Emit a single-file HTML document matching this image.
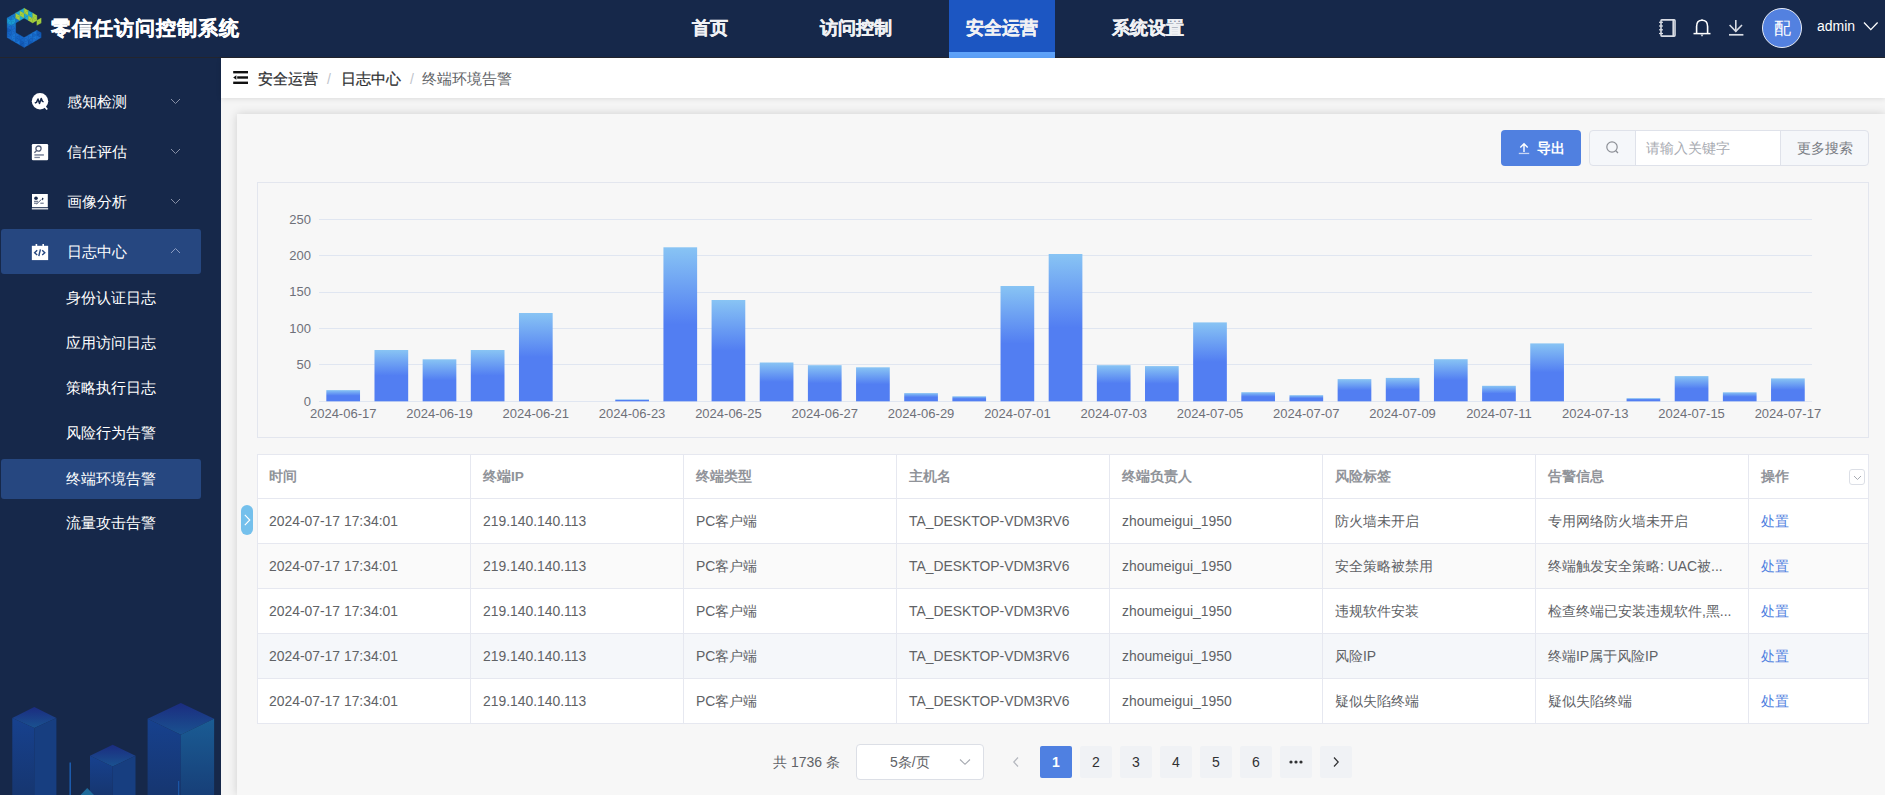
<!DOCTYPE html>
<html><head><meta charset="utf-8">
<style>
*{margin:0;padding:0;box-sizing:border-box}
html,body{width:1885px;height:795px;overflow:hidden;background:#f0f0f0;font-family:"Liberation Sans",sans-serif;}
.abs{position:absolute}
#header{position:absolute;left:0;top:0;width:1885px;height:58px;background:#16284a;border-bottom:1px solid #23252d}
#title{position:absolute;left:51px;top:15px;font-size:20.2px;font-weight:bold;color:#fff;letter-spacing:0.95px;white-space:nowrap;-webkit-text-stroke:0.35px #fff}
.nav{position:absolute;top:0;height:57px;width:106px;text-align:center;font-size:18px;font-weight:bold;color:#f0f1f4;line-height:56px;-webkit-text-stroke:0.35px #f0f1f4}
.nav.active{background:#1c56c2}
.nav.active:after{content:"";position:absolute;left:0;bottom:-1px;width:106px;height:6px;background:#5ea2f9}
#sidebar{position:absolute;left:0;top:58px;width:221px;height:737px;background:#16284a;overflow:hidden}
.mi{position:absolute;left:1px;width:200px;height:45px;color:#fff;font-size:15px}
.mi .t{position:absolute;left:66px;top:0;line-height:45px;white-space:nowrap}
.mi svg.ic{position:absolute;left:29px;width:19px;height:19px}
.mi svg.ch{position:absolute;left:169px;top:19px;width:11px;height:7px}
.mi.active{background:#264780;border-radius:3px}
.si{position:absolute;left:1px;width:200px;height:40px;color:#fff;font-size:15px;line-height:40px}
.si .t{position:absolute;left:65px;white-space:nowrap}
.si.active{background:#264780;border-radius:3px}
#bc{position:absolute;left:221px;top:58px;width:1664px;height:40px;background:#fff;box-shadow:0 1px 5px rgba(0,0,0,0.10)}
#main{position:absolute;left:221px;top:98px;width:1664px;height:697px;background:#f5f5f5}
#card{position:absolute;left:237px;top:114px;width:1648px;height:681px;background:#f7f7f7;box-shadow:0 0 9px rgba(0,0,0,0.16)}
.bct{position:absolute;top:58.5px;line-height:40px;font-size:15px;white-space:nowrap}
.th{position:absolute;top:455px;line-height:44px;font-size:13.6px;font-weight:bold;color:#909399;white-space:nowrap}
.td{position:absolute;line-height:44px;font-size:13.9px;color:#606266;white-space:nowrap}
.td.link{color:#4f7fe0}
.pg{position:absolute;top:746px;width:32px;height:32px;background:#f0f2f5;border-radius:2px;text-align:center;line-height:32px;font-size:14px;color:#303133}
.pg.active{background:#4f80e1;color:#fff;font-weight:bold}
</style></head><body>
<div id="header">
  <svg class="abs" style="left:0;top:0" width="50" height="52" viewBox="0 0 50 52"><g stroke-width="0.35" stroke-linejoin="round"><polygon points="7.20,18.00 7.20,22.90 11.44,20.45" fill="#1a9bd3" stroke="#1a9bd3"/><polygon points="11.44,15.55 11.44,20.45 7.20,18.00" fill="#1677cc" stroke="#1677cc"/><polygon points="7.20,22.90 7.20,27.80 11.44,25.35" fill="#1677cc" stroke="#1677cc"/><polygon points="11.44,20.45 11.44,25.35 7.20,22.90" fill="#1a9bd3" stroke="#1a9bd3"/><polygon points="7.20,27.80 7.20,32.70 11.44,30.25" fill="#125bb8" stroke="#125bb8"/><polygon points="11.44,25.35 11.44,30.25 7.20,27.80" fill="#1a6bcc" stroke="#1a6bcc"/><polygon points="7.20,32.70 7.20,37.60 11.44,35.15" fill="#1565c6" stroke="#1565c6"/><polygon points="11.44,30.25 11.44,35.15 7.20,32.70" fill="#1565c6" stroke="#1565c6"/><polygon points="11.44,35.15 11.44,40.05 7.20,37.60" fill="#1a6bcc" stroke="#1a6bcc"/><polygon points="11.44,15.55 11.44,20.45 15.68,18.00" fill="#1683cf" stroke="#1683cf"/><polygon points="15.68,13.10 15.68,18.00 11.44,15.55" fill="#1677cc" stroke="#1677cc"/><polygon points="11.44,20.45 11.44,25.35 15.68,22.90" fill="#1a9bd3" stroke="#1a9bd3"/><polygon points="15.68,18.00 15.68,22.90 11.44,20.45" fill="#1a9bd3" stroke="#1a9bd3"/><polygon points="11.44,25.35 11.44,30.25 15.68,27.80" fill="#1a6bcc" stroke="#1a6bcc"/><polygon points="15.68,22.90 15.68,27.80 11.44,25.35" fill="#1677cc" stroke="#1677cc"/><polygon points="11.44,30.25 11.44,35.15 15.68,32.70" fill="#1a6bcc" stroke="#1a6bcc"/><polygon points="15.68,27.80 15.68,32.70 11.44,30.25" fill="#1a6bcc" stroke="#1a6bcc"/><polygon points="11.44,35.15 11.44,40.05 15.68,37.60" fill="#1a74d4" stroke="#1a74d4"/><polygon points="15.68,32.70 15.68,37.60 11.44,35.15" fill="#1a74d4" stroke="#1a74d4"/><polygon points="15.68,37.60 15.68,42.50 11.44,40.05" fill="#1a74d4" stroke="#1a74d4"/><polygon points="15.68,13.10 15.68,18.00 19.92,15.55" fill="#a6d03c" stroke="#a6d03c"/><polygon points="19.92,10.65 19.92,15.55 15.68,13.10" fill="#1fa9d2" stroke="#1fa9d2"/><polygon points="15.68,18.00 15.68,22.90 19.92,20.45" fill="#1673cc" stroke="#1673cc"/><polygon points="19.92,15.55 19.92,20.45 15.68,18.00" fill="#a6d03c" stroke="#a6d03c"/><polygon points="15.68,32.70 15.68,37.60 19.92,35.15" fill="#1a6bcc" stroke="#1a6bcc"/><polygon points="15.68,37.60 15.68,42.50 19.92,40.05" fill="#1565c6" stroke="#1565c6"/><polygon points="19.92,35.15 19.92,40.05 15.68,37.60" fill="#1565c6" stroke="#1565c6"/><polygon points="19.92,40.05 19.92,44.95 15.68,42.50" fill="#1a74d4" stroke="#1a74d4"/><polygon points="19.92,10.65 19.92,15.55 24.16,13.10" fill="#a6d03c" stroke="#a6d03c"/><polygon points="24.16,8.20 24.16,13.10 19.92,10.65" fill="#1fa9d2" stroke="#1fa9d2"/><polygon points="19.92,15.55 19.92,20.45 24.16,18.00" fill="#1fa9d2" stroke="#1fa9d2"/><polygon points="24.16,13.10 24.16,18.00 19.92,15.55" fill="#a6d03c" stroke="#a6d03c"/><polygon points="19.92,35.15 19.92,40.05 24.16,37.60" fill="#1565c6" stroke="#1565c6"/><polygon points="19.92,40.05 19.92,44.95 24.16,42.50" fill="#125bb8" stroke="#125bb8"/><polygon points="24.16,37.60 24.16,42.50 19.92,40.05" fill="#1565c6" stroke="#1565c6"/><polygon points="24.16,42.50 24.16,47.40 19.92,44.95" fill="#125bb8" stroke="#125bb8"/><polygon points="24.16,8.20 24.16,13.10 28.40,10.65" fill="#a6d03c" stroke="#a6d03c"/><polygon points="24.16,13.10 24.16,18.00 28.40,15.55" fill="#1fa9d2" stroke="#1fa9d2"/><polygon points="28.40,10.65 28.40,15.55 24.16,13.10" fill="#a6d03c" stroke="#a6d03c"/><polygon points="28.40,15.55 28.40,20.45 24.16,18.00" fill="#1fa9d2" stroke="#1fa9d2"/><polygon points="24.16,37.60 24.16,42.50 28.40,40.05" fill="#1a6bcc" stroke="#1a6bcc"/><polygon points="28.40,35.15 28.40,40.05 24.16,37.60" fill="#1a6bcc" stroke="#1a6bcc"/><polygon points="24.16,42.50 24.16,47.40 28.40,44.95" fill="#1a6bcc" stroke="#1a6bcc"/><polygon points="28.40,40.05 28.40,44.95 24.16,42.50" fill="#1a6bcc" stroke="#1a6bcc"/><polygon points="28.40,10.65 28.40,15.55 32.64,13.10" fill="#1fa9d2" stroke="#1fa9d2"/><polygon points="28.40,15.55 28.40,20.45 32.64,18.00" fill="#a6d03c" stroke="#a6d03c"/><polygon points="32.64,13.10 32.64,18.00 28.40,15.55" fill="#1fa9d2" stroke="#1fa9d2"/><polygon points="32.64,18.00 32.64,22.90 28.40,20.45" fill="#a6d03c" stroke="#a6d03c"/><polygon points="28.40,35.15 28.40,40.05 32.64,37.60" fill="#1a6bcc" stroke="#1a6bcc"/><polygon points="32.64,32.70 32.64,37.60 28.40,35.15" fill="#1a74d4" stroke="#1a74d4"/><polygon points="28.40,40.05 28.40,44.95 32.64,42.50" fill="#125bb8" stroke="#125bb8"/><polygon points="32.64,37.60 32.64,42.50 28.40,40.05" fill="#1565c6" stroke="#1565c6"/><polygon points="32.64,13.10 32.64,18.00 36.88,15.55" fill="#a6d03c" stroke="#a6d03c"/><polygon points="32.64,18.00 32.64,22.90 36.88,20.45" fill="#a6d03c" stroke="#a6d03c"/><polygon points="36.88,15.55 36.88,20.45 32.64,18.00" fill="#a6d03c" stroke="#a6d03c"/><polygon points="32.64,32.70 32.64,37.60 36.88,35.15" fill="#1565c6" stroke="#1565c6"/><polygon points="36.88,30.25 36.88,35.15 32.64,32.70" fill="#1a74d4" stroke="#1a74d4"/><polygon points="32.64,37.60 32.64,42.50 36.88,40.05" fill="#1a6bcc" stroke="#1a6bcc"/><polygon points="36.88,35.15 36.88,40.05 32.64,37.60" fill="#1a74d4" stroke="#1a74d4"/><polygon points="36.88,30.25 36.88,35.15 41.12,32.70" fill="#125bb8" stroke="#125bb8"/><polygon points="36.88,35.15 36.88,40.05 41.12,37.60" fill="#1a6bcc" stroke="#1a6bcc"/><polygon points="41.12,32.70 41.12,37.60 36.88,35.15" fill="#125bb8" stroke="#125bb8"/><polygon points="36.88,20.45 41.12,18.00 41.12,22.90" fill="#a6d03c" stroke="#a6d03c"/><polygon points="36.88,25.35 36.88,20.45 41.12,22.90" fill="#a6d03c" stroke="#a6d03c"/></g></svg>
  <div id="title">零信任访问控制系统</div>
  <div class="nav" style="left:657px">首页</div>
  <div class="nav" style="left:803px">访问控制</div>
  <div class="nav active" style="left:949px">安全运营</div>
  <div class="nav" style="left:1095px">系统设置</div>
  <!-- right icons -->
  <svg class="abs" style="left:1655px;top:16px" width="95" height="24" viewBox="1655 16 95 24" fill="none" stroke="#d9dce4" stroke-width="1.6">
    <rect x="1661" y="19.9" width="14" height="16.2" rx="0.8"/>
    <line x1="1673.2" y1="20" x2="1673.2" y2="36"/>
    <g stroke-width="1.2"><line x1="1659" y1="22.3" x2="1663" y2="22.3"/><line x1="1659" y1="26" x2="1663" y2="26"/><line x1="1659" y1="29.8" x2="1663" y2="29.8"/><line x1="1659" y1="33.5" x2="1663" y2="33.5"/></g>
    <path d="M1696.6,33.2 L1696.6,26.5 Q1696.6,20.3 1702,20.3 Q1707.6,20.3 1707.6,26.5 L1707.6,33.2" stroke="#fff"/>
    <line x1="1693.5" y1="33.6" x2="1710.5" y2="33.6" stroke="#fff" stroke-width="1.5"/>
    <path d="M1701,19.7 Q1702,18.3 1703,19.7 Z" fill="#fff" stroke="none"/>
    <path d="M1700.5,34.5 L1703.5,34.5 L1702,36.8 Z" fill="#d9dce4" stroke="none"/>
    <line x1="1735.8" y1="20" x2="1735.8" y2="31.5"/>
    <path d="M1729.6,25 L1735.8,31.3 L1742,25"/>
    <line x1="1729" y1="34.8" x2="1743.4" y2="34.8" stroke-width="1.7"/>
  </svg>
  <div class="abs" style="left:1762px;top:8px;width:40px;height:40px;border-radius:50%;background:#5381e0;border:1px solid #e8ecf5;color:#fff;font-size:16.5px;line-height:38px;text-align:center">配</div>
  <div class="abs" style="left:1817px;top:16px;color:#fff;font-size:14px;line-height:20px">admin</div>
  <svg class="abs" style="left:1863px;top:21px" width="16" height="11" viewBox="0 0 16 11" fill="none" stroke="#fff" stroke-width="1.3"><path d="M1,1.5 L7.8,8.6 L14.6,1.5"/></svg>
</div>
<div id="sidebar">
  <!-- coordinates inside sidebar: page y - 58 -->
  <div class="mi" style="top:21px">
    <svg class="ic" style="top:13px" viewBox="0 0 19 19"><circle cx="10" cy="9.2" r="8.2" fill="#fff"/><path d="M14.5,14.5 L17.2,17.5 L15.2,15" stroke="#fff" stroke-width="1.6"/><path d="M4.8,11 L6.5,10.4 L8,7 L9.5,11.4 L11.2,6.4 L12.4,9.4 L13.6,9.8" fill="none" stroke="#16284a" stroke-width="1.5" stroke-linejoin="round"/></svg>
    <div class="t">感知检测</div>
    <svg class="ch" viewBox="0 0 11 7"><path d="M1,1 L5.5,5.5 L10,1" fill="none" stroke="#8790a6" stroke-width="1"/></svg>
  </div>
  <div class="mi" style="top:71px">
    <svg class="ic" style="top:13.5px" viewBox="0 0 19 19"><rect x="1.85" y="1" width="16.3" height="16.3" rx="1.2" fill="#fff"/><circle cx="8.5" cy="5.6" r="2.6" fill="none" stroke="#55607a" stroke-width="1.3"/><line x1="6.6" y1="7.6" x2="4.4" y2="9.8" stroke="#55607a" stroke-width="1.3"/><rect x="4.4" y="11.2" width="9.5" height="1.5" fill="#7a849a"/><rect x="4.4" y="13.8" width="5.5" height="1.3" fill="#7a849a"/></svg>
    <div class="t">信任评估</div>
    <svg class="ch" viewBox="0 0 11 7"><path d="M1,1 L5.5,5.5 L10,1" fill="none" stroke="#8790a6" stroke-width="1"/></svg>
  </div>
  <div class="mi" style="top:121px">
    <svg class="ic" style="top:13.5px" viewBox="0 0 19 19"><rect x="2" y="1" width="15.8" height="13.2" fill="#fff"/><rect x="1.85" y="15.2" width="16.3" height="1.2" fill="#fff"/><circle cx="6" cy="5.3" r="1.8" fill="#16284a"/><rect x="4" y="7.8" width="4" height="1" fill="#55607a"/><rect x="4" y="9.6" width="3.5" height="1.3" fill="#7a849a"/><path d="M6.5,11 L11.5,6.4" stroke="#55607a" stroke-width="1"/><path d="M12,4.5 L13.8,5.8 L12,7.6 Z" fill="#16284a"/><rect x="10.3" y="9.6" width="3.4" height="1.3" fill="#7a849a"/></svg>
    <div class="t">画像分析</div>
    <svg class="ch" viewBox="0 0 11 7"><path d="M1,1 L5.5,5.5 L10,1" fill="none" stroke="#8790a6" stroke-width="1"/></svg>
  </div>
  <div class="mi active" style="top:171px">
    <svg class="ic" style="top:12.5px" viewBox="0 0 19 19"><rect x="1.85" y="3.8" width="16.3" height="14.3" fill="#fff"/><rect x="5.6" y="2" width="1.6" height="3" fill="#fff"/><rect x="12.4" y="2" width="1.6" height="3" fill="#fff"/><path d="M7.2,8.2 L4.6,10.7 L7.2,13" fill="none" stroke="#264780" stroke-width="1.4"/><path d="M12.2,8.2 L14.8,10.7 L12.2,13" fill="none" stroke="#264780" stroke-width="1.4"/><path d="M10.4,7.3 L8.8,14.2" stroke="#264780" stroke-width="1.4"/></svg>
    <div class="t">日志中心</div>
    <svg class="ch" viewBox="0 0 11 7" style="top:18px"><path d="M1,6 L5.5,1.5 L10,6" fill="none" stroke="#8a9bc0" stroke-width="1"/></svg>
  </div>
  <div class="si" style="top:220px"><span class="t">身份认证日志</span></div>
  <div class="si" style="top:265px"><span class="t">应用访问日志</span></div>
  <div class="si" style="top:310px"><span class="t">策略执行日志</span></div>
  <div class="si" style="top:355px"><span class="t">风险行为告警</span></div>
  <div class="si active" style="top:401px"><span class="t">终端环境告警</span></div>
  <div class="si" style="top:445px"><span class="t">流量攻击告警</span></div>
  <!-- buildings -->
  <svg class="abs" style="left:0;top:620px" width="221" height="117" viewBox="0 678 221 117">
    <defs>
      <linearGradient id="bf" x1="0" y1="0" x2="0" y2="1"><stop offset="0" stop-color="#17418e"/><stop offset="1" stop-color="#163670"/></linearGradient>
      <linearGradient id="bs" x1="0" y1="0" x2="0" y2="1"><stop offset="0" stop-color="#1a5c94"/><stop offset="1" stop-color="#173f78"/></linearGradient>
      <linearGradient id="bt" x1="0" y1="0" x2="0" y2="1"><stop offset="0" stop-color="#1b2c80"/><stop offset="1" stop-color="#1a5290"/></linearGradient>
    </defs>
    <!-- b1 -->
    <path d="M12.3,718 L34.3,707 L56.4,718 L34.3,728 Z" fill="url(#bt)"/>
    <path d="M12.3,718 L34.3,728 L34.3,795 L12.3,795 Z" fill="url(#bf)"/>
    <path d="M34.3,728 L56.4,718 L56.4,795 L34.3,795 Z" fill="#173e80"/>
    <!-- b2 -->
    <path d="M90,755.8 L112.7,744.7 L135.5,755.8 L112.7,766.6 Z" fill="url(#bt)"/>
    <path d="M90,755.8 L112.7,766.6 L112.7,795 L90,795 Z" fill="url(#bf)"/>
    <path d="M112.7,766.6 L135.5,755.8 L135.5,795 L112.7,795 Z" fill="#173e80"/>
    <!-- b3 -->
    <path d="M147.6,718.8 L180.8,703 L214.1,718.8 L180.8,734.8 Z" fill="url(#bt)"/>
    <path d="M147.6,718.8 L180.8,734.8 L180.8,795 L147.6,795 Z" fill="url(#bf)"/>
    <path d="M180.8,734.8 L214.1,718.8 L214.1,795 L180.8,795 Z" fill="url(#bs)"/>
    <line x1="70.2" y1="762.6" x2="70.2" y2="795" stroke="#1d5db0" stroke-width="1.5"/>
    <line x1="178.7" y1="781" x2="178.7" y2="795" stroke="#1d5db0" stroke-width="1"/>
    <path d="M80.5,795 L87.2,788 L94,795 Z" fill="#1e6a9a"/>
  </svg>
</div>
<div id="main"></div>
<div id="bc"></div>
<svg class="abs" style="left:232px;top:70px" width="18" height="16" viewBox="0 0 18 16">
  <rect x="1.2" y="1" width="14.8" height="2.4" fill="#111"/>
  <rect x="5.2" y="6.3" width="10.8" height="2.4" fill="#111"/>
  <rect x="1.2" y="11.6" width="14.8" height="2.4" fill="#111"/>
  <path d="M1.2,7.5 L4.4,5.2 L4.4,9.8 Z" fill="#111"/>
</svg>
<div class="bct" style="left:258px;color:#303133;-webkit-text-stroke:0.25px #303133">安全运营</div>
<div class="bct" style="left:327px;color:#c0c4cc;font-size:14px">/</div>
<div class="bct" style="left:341px;color:#303133;-webkit-text-stroke:0.25px #303133">日志中心</div>
<div class="bct" style="left:410px;color:#c0c4cc;font-size:14px">/</div>
<div class="bct" style="left:422px;color:#606266">终端环境告警</div>
<div id="card"></div>
<!-- toolbar -->
<div class="abs" style="left:1501px;top:130px;width:80px;height:36px;background:#5080e0;border-radius:4px;color:#fff;font-size:14px;font-weight:bold;line-height:36px">
  <svg class="abs" style="left:17px;top:11px" width="12" height="14" viewBox="0 0 12 14"><path d="M6,11 L6,3 M2.3,6.5 L6,2.8 L9.7,6.5" fill="none" stroke="#fff" stroke-width="1.4"/><rect x="0.8" y="11.8" width="10.4" height="1.3" fill="#c9d6f5"/></svg>
  <span class="abs" style="left:36px;top:0">导出</span>
</div>
<div class="abs" style="left:1589px;top:130px;width:280px;height:36px;border:1px solid #dfe2ea;border-radius:4px;background:#f5f7fa;overflow:hidden">
  <div class="abs" style="left:45px;top:0;width:146px;height:34px;background:#fff;border-left:1px solid #dfe2ea;border-right:1px solid #dfe2ea"></div>
  <svg class="abs" style="left:15px;top:9px" width="16" height="16" viewBox="0 0 16 16"><circle cx="7" cy="7" r="5.2" fill="none" stroke="#8c8f96" stroke-width="1.2"/><path d="M10.8,10.8 L13,13" stroke="#8c8f96" stroke-width="1.3"/></svg>
  <div class="abs" style="left:56px;top:0;line-height:34px;font-size:14px;color:#a8abb2;white-space:nowrap">请输入关键字</div>
  <div class="abs" style="left:207px;top:0;line-height:34px;font-size:14px;color:#7a7d84;white-space:nowrap">更多搜索</div>
</div>
<!-- chart box -->
<div class="abs" style="left:257px;top:182px;width:1612px;height:256px;border:1px solid #e3e6ee"></div>
<svg class="abs" style="left:0;top:0" width="1885" height="795" viewBox="0 0 1885 795">
<defs><linearGradient id="bg" x1="0" y1="0" x2="0" y2="1"><stop offset="0" stop-color="#88c4f4"/><stop offset="0.5" stop-color="#527ef2"/><stop offset="1" stop-color="#527ef2"/></linearGradient></defs>
<g stroke="#e0e6f1" stroke-width="1"><line x1="319" y1="401.5" x2="1812" y2="401.5"/><line x1="319" y1="364.5" x2="1812" y2="364.5"/><line x1="319" y1="328.5" x2="1812" y2="328.5"/><line x1="319" y1="292.5" x2="1812" y2="292.5"/><line x1="319" y1="255.5" x2="1812" y2="255.5"/><line x1="319" y1="219.5" x2="1812" y2="219.5"/></g>
<g fill="url(#bg)"><rect x="326.33" y="390.10" width="33.70" height="11.20"/><rect x="374.49" y="350.00" width="33.70" height="51.30"/><rect x="422.64" y="359.30" width="33.70" height="42.00"/><rect x="470.80" y="350.00" width="33.70" height="51.30"/><rect x="518.96" y="313.00" width="33.70" height="88.30"/><rect x="615.27" y="399.40" width="33.70" height="1.90"/><rect x="663.43" y="247.30" width="33.70" height="154.00"/><rect x="711.58" y="300.00" width="33.70" height="101.30"/><rect x="759.74" y="362.50" width="33.70" height="38.80"/><rect x="807.90" y="365.20" width="33.70" height="36.10"/><rect x="856.06" y="367.30" width="33.70" height="34.00"/><rect x="904.21" y="393.10" width="33.70" height="8.20"/><rect x="952.37" y="396.30" width="33.70" height="5.00"/><rect x="1000.53" y="286.00" width="33.70" height="115.30"/><rect x="1048.68" y="254.00" width="33.70" height="147.30"/><rect x="1096.84" y="365.20" width="33.70" height="36.10"/><rect x="1145.00" y="366.10" width="33.70" height="35.20"/><rect x="1193.15" y="322.40" width="33.70" height="78.90"/><rect x="1241.31" y="392.20" width="33.70" height="9.10"/><rect x="1289.47" y="395.20" width="33.70" height="6.10"/><rect x="1337.63" y="379.10" width="33.70" height="22.20"/><rect x="1385.78" y="377.90" width="33.70" height="23.40"/><rect x="1433.94" y="359.20" width="33.70" height="42.10"/><rect x="1482.10" y="385.80" width="33.70" height="15.50"/><rect x="1530.25" y="343.40" width="33.70" height="57.90"/><rect x="1626.57" y="398.20" width="33.70" height="3.10"/><rect x="1674.72" y="376.10" width="33.70" height="25.20"/><rect x="1722.88" y="392.30" width="33.70" height="9.00"/><rect x="1771.04" y="378.40" width="33.70" height="22.90"/></g>
<g fill="#6e7079" font-size="13" text-anchor="end" font-family="Liberation Sans"><text x="311" y="405.8">0</text><text x="311" y="369.3">50</text><text x="311" y="332.9">100</text><text x="311" y="296.4">150</text><text x="311" y="260.0">200</text><text x="311" y="223.5">250</text></g>
<g fill="#6e7079" font-size="13" text-anchor="middle" font-family="Liberation Sans"><text x="343.2" y="418">2024-06-17</text><text x="439.5" y="418">2024-06-19</text><text x="535.8" y="418">2024-06-21</text><text x="632.1" y="418">2024-06-23</text><text x="728.4" y="418">2024-06-25</text><text x="824.7" y="418">2024-06-27</text><text x="921.1" y="418">2024-06-29</text><text x="1017.4" y="418">2024-07-01</text><text x="1113.7" y="418">2024-07-03</text><text x="1210.0" y="418">2024-07-05</text><text x="1306.3" y="418">2024-07-07</text><text x="1402.6" y="418">2024-07-09</text><text x="1498.9" y="418">2024-07-11</text><text x="1595.3" y="418">2024-07-13</text><text x="1691.6" y="418">2024-07-15</text><text x="1787.9" y="418">2024-07-17</text></g>
</svg><div class="abs" style="left:257px;top:454px;width:1612px;height:270px;background:#fff"></div>
<div class="abs" style="left:258px;top:499px;width:1610px;height:44px;background:#ffffff"></div>
<div class="abs" style="left:258px;top:544px;width:1610px;height:44px;background:#fafafa"></div>
<div class="abs" style="left:258px;top:589px;width:1610px;height:44px;background:#ffffff"></div>
<div class="abs" style="left:258px;top:634px;width:1610px;height:44px;background:#f5f7fa"></div>
<div class="abs" style="left:258px;top:679px;width:1610px;height:44px;background:#ffffff"></div>
<div class="th" style="left:269px">时间</div>
<div class="th" style="left:483px">终端IP</div>
<div class="th" style="left:696px">终端类型</div>
<div class="th" style="left:909px">主机名</div>
<div class="th" style="left:1122px">终端负责人</div>
<div class="th" style="left:1335px">风险标签</div>
<div class="th" style="left:1548px">告警信息</div>
<div class="th" style="left:1761px">操作</div>
<div class="td" style="left:269px;top:499px">2024-07-17 17:34:01</div>
<div class="td" style="left:483px;top:499px">219.140.140.113</div>
<div class="td" style="left:696px;top:499px">PC客户端</div>
<div class="td" style="left:909px;top:499px">TA_DESKTOP-VDM3RV6</div>
<div class="td" style="left:1122px;top:499px">zhoumeigui_1950</div>
<div class="td" style="left:1335px;top:499px">防火墙未开启</div>
<div class="td" style="left:1548px;top:499px">专用网络防火墙未开启</div>
<div class="td link" style="left:1761px;top:499px">处置</div>
<div class="td" style="left:269px;top:544px">2024-07-17 17:34:01</div>
<div class="td" style="left:483px;top:544px">219.140.140.113</div>
<div class="td" style="left:696px;top:544px">PC客户端</div>
<div class="td" style="left:909px;top:544px">TA_DESKTOP-VDM3RV6</div>
<div class="td" style="left:1122px;top:544px">zhoumeigui_1950</div>
<div class="td" style="left:1335px;top:544px">安全策略被禁用</div>
<div class="td" style="left:1548px;top:544px">终端触发安全策略: UAC被...</div>
<div class="td link" style="left:1761px;top:544px">处置</div>
<div class="td" style="left:269px;top:589px">2024-07-17 17:34:01</div>
<div class="td" style="left:483px;top:589px">219.140.140.113</div>
<div class="td" style="left:696px;top:589px">PC客户端</div>
<div class="td" style="left:909px;top:589px">TA_DESKTOP-VDM3RV6</div>
<div class="td" style="left:1122px;top:589px">zhoumeigui_1950</div>
<div class="td" style="left:1335px;top:589px">违规软件安装</div>
<div class="td" style="left:1548px;top:589px">检查终端已安装违规软件,黑...</div>
<div class="td link" style="left:1761px;top:589px">处置</div>
<div class="td" style="left:269px;top:634px">2024-07-17 17:34:01</div>
<div class="td" style="left:483px;top:634px">219.140.140.113</div>
<div class="td" style="left:696px;top:634px">PC客户端</div>
<div class="td" style="left:909px;top:634px">TA_DESKTOP-VDM3RV6</div>
<div class="td" style="left:1122px;top:634px">zhoumeigui_1950</div>
<div class="td" style="left:1335px;top:634px">风险IP</div>
<div class="td" style="left:1548px;top:634px">终端IP属于风险IP</div>
<div class="td link" style="left:1761px;top:634px">处置</div>
<div class="td" style="left:269px;top:679px">2024-07-17 17:34:01</div>
<div class="td" style="left:483px;top:679px">219.140.140.113</div>
<div class="td" style="left:696px;top:679px">PC客户端</div>
<div class="td" style="left:909px;top:679px">TA_DESKTOP-VDM3RV6</div>
<div class="td" style="left:1122px;top:679px">zhoumeigui_1950</div>
<div class="td" style="left:1335px;top:679px">疑似失陷终端</div>
<div class="td" style="left:1548px;top:679px">疑似失陷终端</div>
<div class="td link" style="left:1761px;top:679px">处置</div>
<svg class="abs" style="left:0;top:0" width="1885" height="795"><g stroke="#e6e8f0" stroke-width="1"><line x1="257" y1="454.5" x2="1869" y2="454.5"/><line x1="257" y1="498.5" x2="1869" y2="498.5"/><line x1="257" y1="543.5" x2="1869" y2="543.5"/><line x1="257" y1="588.5" x2="1869" y2="588.5"/><line x1="257" y1="633.5" x2="1869" y2="633.5"/><line x1="257" y1="678.5" x2="1869" y2="678.5"/><line x1="257" y1="723.5" x2="1869" y2="723.5"/><line x1="257.5" y1="454" x2="257.5" y2="724"/><line x1="470.5" y1="454" x2="470.5" y2="724"/><line x1="683.5" y1="454" x2="683.5" y2="724"/><line x1="896.5" y1="454" x2="896.5" y2="724"/><line x1="1109.5" y1="454" x2="1109.5" y2="724"/><line x1="1322.5" y1="454" x2="1322.5" y2="724"/><line x1="1535.5" y1="454" x2="1535.5" y2="724"/><line x1="1748.5" y1="454" x2="1748.5" y2="724"/><line x1="1868.5" y1="454" x2="1868.5" y2="724"/></g></svg><!-- header dropdown icon -->
<div class="abs" style="left:1849px;top:469px;width:16px;height:16px;border:1px solid #dcdfe6;border-radius:3px;background:#fff">
  <svg class="abs" style="left:3px;top:5px" width="9" height="6" viewBox="0 0 9 6"><path d="M1,1 L4.5,4.5 L8,1" fill="none" stroke="#a8abb2" stroke-width="1"/></svg>
</div>
<!-- side pill -->
<div class="abs" style="left:241px;top:505px;width:12px;height:30px;border-radius:6px;background:#74c0ec">
  <svg class="abs" style="left:0;top:7px" width="12" height="16" viewBox="0 0 12 16"><path d="M3.8,2.8 L8.8,8 L3.8,13.2" fill="none" stroke="#fff" stroke-width="1.1"/></svg>
</div>
<!-- pagination -->
<div class="abs" style="left:773px;top:745px;line-height:35px;font-size:14px;color:#606266;white-space:nowrap">共 1736 条</div>
<div class="abs" style="left:856px;top:744px;width:128px;height:36px;border:1px solid #dcdfe6;border-radius:4px;background:#fff">
  <div class="abs" style="left:33px;top:0;line-height:34px;font-size:14px;color:#606266;white-space:nowrap">5条/页</div>
  <svg class="abs" style="left:102px;top:13px" width="12" height="8" viewBox="0 0 12 8"><path d="M1,1.5 L6,6.3 L11,1.5" fill="none" stroke="#a8abb2" stroke-width="1.1"/></svg>
</div>
<svg class="abs" style="left:1011px;top:756px" width="10" height="12" viewBox="0 0 10 12"><path d="M7,1.5 L2.8,6 L7,10.5" fill="none" stroke="#b4b7be" stroke-width="1.2"/></svg>
<div class="pg active" style="left:1040px">1</div>
<div class="pg" style="left:1080px">2</div>
<div class="pg" style="left:1120px">3</div>
<div class="pg" style="left:1160px">4</div>
<div class="pg" style="left:1200px">5</div>
<div class="pg" style="left:1240px">6</div>
<div class="pg" style="left:1280px"><svg class="abs" style="left:8px;top:14px" width="16" height="4" viewBox="0 0 16 4"><circle cx="3" cy="2" r="1.6" fill="#303133"/><circle cx="8" cy="2" r="1.6" fill="#303133"/><circle cx="13" cy="2" r="1.6" fill="#303133"/></svg></div>
<div class="pg" style="left:1320px"><svg class="abs" style="left:11px;top:10px" width="10" height="12" viewBox="0 0 10 12"><path d="M3,1.5 L7.2,6 L3,10.5" fill="none" stroke="#303133" stroke-width="1.2"/></svg></div>
</body></html>
